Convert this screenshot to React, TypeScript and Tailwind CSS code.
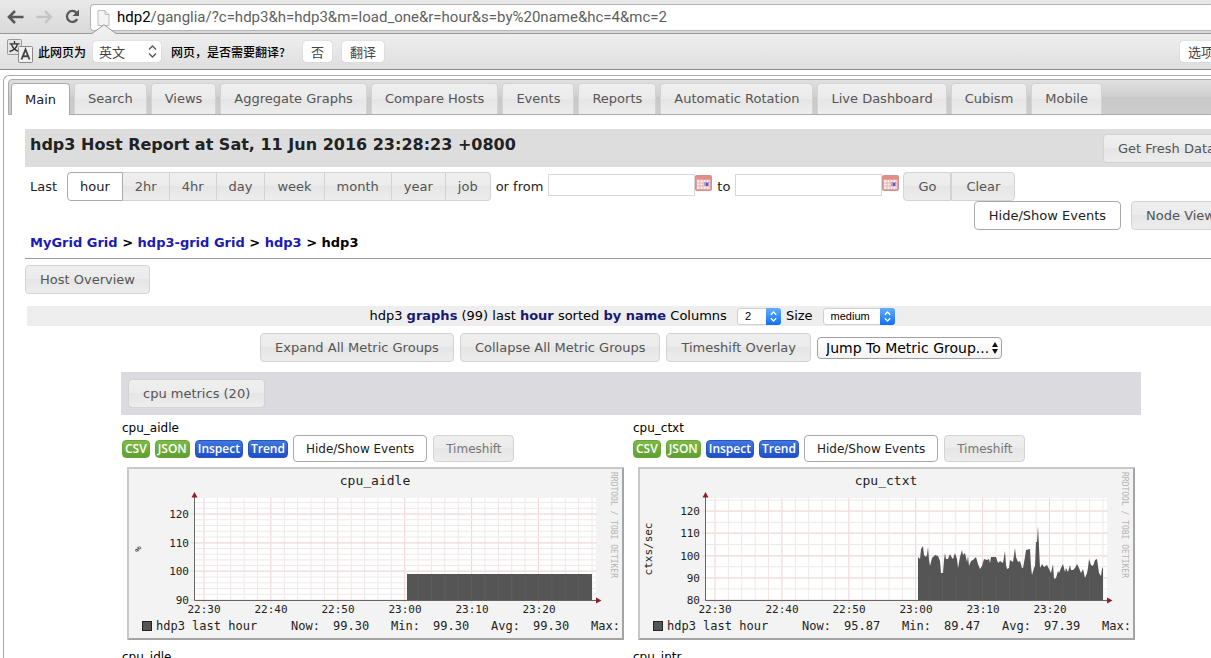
import React from "react";

const glass =
  "bg-[linear-gradient(to_bottom,#efefef_0%,#ebebeb_49%,#e5e5e5_50%,#ededed_100%)]";

const tabs = [
  "Search",
  "Views",
  "Aggregate Graphs",
  "Compare Hosts",
  "Events",
  "Reports",
  "Automatic Rotation",
  "Live Dashboard",
  "Cubism",
  "Mobile",
];

const ranges = ["2hr", "4hr", "day", "week", "month", "year", "job"];

const sizes = {
  normal: "h-[29px] px-[14px] text-[13px]",
  tight: "h-[29px] px-3 text-[13px]",
  small: "h-[27px] px-3 text-xs",
};

function Button({
  children,
  active = false,
  size = "normal",
  className = "",
}: {
  children: React.ReactNode;
  active?: boolean;
  size?: keyof typeof sizes;
  className?: string;
}) {
  return (
    <button
      type="button"
      className={`shrink-0 rounded border whitespace-nowrap ${
        active
          ? "border-[#aaaaaa] bg-white text-[#212121]"
          : `border-[#d3d3d3] text-[#555555] ${glass}`
      } ${sizes[size]} ${className}`}
    >
      {children}
    </button>
  );
}

function CalendarButton({ label }: { label: string }) {
  return (
    <button type="button" aria-label={label} className="mt-[3px] self-start">
      <svg width="17" height="16" viewBox="0 0 17 16" className="block">
        <rect x="0.5" y="0.5" width="16" height="15" rx="1" fill="#e2a19d" stroke="#cf938f" />
        <rect x="1" y="1" width="15" height="3" fill="#e58d86" />
        <rect x="2" y="5" width="13" height="9" fill="#fbeeee" />
        <path d="M2 8H15M2 11H15M5 5V14M8 5V14M11 5V14M14 5V14" stroke="#e6b4b2" />
        <rect x="9" y="7" width="5" height="4" fill="#a9a0d8" />
        <rect x="11" y="8" width="2" height="3" fill="#5d55c0" />
      </svg>
    </button>
  );
}

function MacSelect({ label, options, width }: { label: string; options: string[]; width: string }) {
  return (
    <span className={`relative inline-block ${width}`}>
      <select
        aria-label={label}
        className="block h-[17px] w-full appearance-none rounded-[3px] border border-[#d0d0d0] bg-white pl-[7px] font-['Liberation_Sans',sans-serif] text-[11px] leading-[15px] text-black"
      >
        {options.map((o) => (
          <option key={o}>{o}</option>
        ))}
      </select>
      <svg
        width="15"
        height="17"
        viewBox="0 0 15 17"
        className="pointer-events-none absolute top-0 right-0"
      >
        <defs>
          <linearGradient id="cap" x1="0" y1="0" x2="0" y2="1">
            <stop offset="0" stopColor="#64aefb" />
            <stop offset="1" stopColor="#0f6ff5" />
          </linearGradient>
        </defs>
        <path d="M0 0H12a3 3 0 0 1 3 3V14a3 3 0 0 1-3 3H0Z" fill="url(#cap)" />
        <path d="M4.8 6.8L7.5 4L10.2 6.8M4.8 10.2L7.5 13L10.2 10.2" fill="none" stroke="#fff" strokeWidth="1.3" />
      </svg>
    </span>
  );
}

function BrowserBar() {
  return (
    <div className="flex h-[34px] items-center border-b border-[#999999] bg-[linear-gradient(#e9e9e9,#d9d9d9)] pl-[7px] font-[Roboto,sans-serif] text-[15px]">
      <button type="button" aria-label="Back" className="mr-3">
        <svg width="17" height="14" viewBox="0 0 17 14" className="block" fill="none" stroke="#585858" strokeWidth="2.6">
          <path d="M16.5 7H3M8 1L2 7L8 13" />
        </svg>
      </button>
      <button type="button" aria-label="Forward" className="mr-3">
        <svg width="17" height="14" viewBox="0 0 17 14" className="block" fill="none" stroke="#c4c4c4" strokeWidth="2.4">
          <path d="M0.5 7H14M9 1L15 7L9 13" />
        </svg>
      </button>
      <button type="button" aria-label="Reload" className="mr-[10px]">
        <svg width="15" height="15" viewBox="0 0 15 15" className="block">
          <path d="M12.2 10.2A5.5 5.5 0 1 1 11.6 3.8" fill="none" stroke="#585858" strokeWidth="2.3" />
          <path d="M14 0.5V7H7.6Z" fill="#585858" />
        </svg>
      </button>
      <div className="mt-px flex h-[27px] grow items-center rounded-l border border-r-0 border-[#b5b5b5] bg-white pt-px pl-[6px]">
        <svg width="13" height="16" viewBox="0 0 13 16" className="mr-[7px] shrink-0">
          <path d="M1 0.5H8L12 4.5V15.5H1Z" fill="#f4f4f4" stroke="#bdbdbd" />
          <path d="M8 0.5V4.5H12" fill="none" stroke="#bdbdbd" />
        </svg>
        <span className="whitespace-nowrap text-[#5f5f5f]">
          <span className="text-black">hdp2</span>
          /ganglia/?c=hdp3&amp;h=hdp3&amp;m=load_one&amp;r=hour&amp;s=by%20name&amp;hc=4&amp;mc=2
        </span>
      </div>
    </div>
  );
}

function TranslateBar() {
  const pill = "h-[21px] shrink-0 rounded-[3px] bg-white shadow-[0_0_1px_#999] text-[13px] text-[#444444]";
  return (
    <div className="relative flex h-9 items-center border-b border-[#8c8c8c] bg-[linear-gradient(#efefef,#dedede)] pl-[7px] font-['Noto_Sans_CJK_SC',sans-serif] text-xs font-medium text-black">
      <svg width="24" height="10" viewBox="0 0 24 10" className="absolute -top-[10px] left-[92px]">
        <path d="M0 10L12 0.5L24 10Z" fill="#efefef" />
        <path d="M0 9.5L12 0.7L24 9.5" fill="none" stroke="#999" />
      </svg>
      <svg width="27" height="25" viewBox="0 0 27 25" className="mr-1 shrink-0">
        <rect x="0.5" y="0.5" width="14" height="15" rx="1" fill="#e4e4e4" stroke="#9a9a9a" />
        <path d="M7.5 2V4.500M2.500 4.800H12.500M4.500 5C5.500 9 8.500 11.500 12 12.500M10.500 5C9.500 9 6.500 11.500 2.500 12.500" fill="none" stroke="#333" strokeWidth="1.300" />
        <rect x="11.5" y="7.5" width="14" height="16" rx="1" fill="#f0f0f0" stroke="#888" />
        <path d="M14.5 20.5L18.5 10.5L22.5 20.5M15.8 17.3H21.2" fill="none" stroke="#444" strokeWidth="1.9" />
      </svg>
      <span className="shrink-0">此网页为</span>
      <span className="relative ml-[7px] w-[68px] shrink-0">
        <select aria-label="网页语言" className={`block w-full appearance-none pl-[6px] font-normal ${pill}`}>
          <option>英文</option>
        </select>
        <svg width="9" height="13" viewBox="0 0 9 13" className="pointer-events-none absolute top-1 right-1" fill="none" stroke="#555" strokeWidth="1.3">
          <path d="M1 4.5L4.5 1L8 4.5M1 8.5L4.5 12L8 8.5" />
        </svg>
      </span>
      <span className="ml-[10px] shrink-0">网页，是否需要翻译?</span>
      <button type="button" className={`ml-[18px] px-2 font-normal ${pill}`}>否</button>
      <button type="button" className={`ml-[10px] px-2 font-normal ${pill}`}>翻译</button>
      <button type="button" className={`-mr-[11px] ml-auto px-2 font-normal ${pill}`}>选项</button>
    </div>
  );
}

const ctxt: [number, number][] = [
  [280, 90], [282, 92], [283, 82], [285, 79], [286, 88], [288, 90], [289, 88], [290, 80], [291, 93], [292, 99],
  [294, 91], [297, 88], [300, 89], [302, 94], [303, 106], [305, 106], [306, 93], [307, 86], [308, 92], [310, 92],
  [312, 87], [314, 91], [315, 92], [317, 86], [319, 92], [320, 101], [322, 90], [324, 83], [325, 88], [327, 86],
  [329, 95], [330, 89], [331, 99], [333, 94], [335, 93], [338, 90], [340, 97], [342, 102], [344, 99], [346, 92],
  [349, 93], [351, 92], [352, 96], [353, 90], [358, 90], [360, 96], [362, 94], [365, 96], [367, 84], [368, 98],
  [369, 102], [371, 101], [372, 93], [375, 95], [377, 81], [378, 90], [380, 95], [382, 94], [384, 101], [385, 101],
  [387, 90], [388, 83], [392, 82], [393, 100], [394, 108], [396, 101], [397, 99], [398, 75], [399, 75], [400, 59],
  [401, 80], [402, 101], [404, 97], [406, 100], [409, 98], [411, 102], [413, 106], [415, 97], [416, 112], [418, 111],
  [420, 104], [421, 106], [423, 101], [425, 97], [427, 105], [428, 101], [430, 105], [432, 98], [433, 103], [435, 103],
  [437, 101], [439, 97], [441, 101], [443, 106], [445, 102], [447, 111], [449, 106], [450, 101], [451, 92], [453, 98],
  [455, 99], [457, 93], [459, 92], [461, 106], [463, 109], [464, 102], [465, 100],
];

const idle: [number, number][] = [
  [280, 107],
  [465, 107],
];

type ChartProps = {
  title: string;
  unit: string;
  ticks: { y: number; label: string }[];
  minor: number;
  series: [number, number][];
  now: string;
  min: string;
  avg: string;
};

function Chart({ title, unit, ticks, minor, series, now, min, avg }: ChartProps) {
  const times = ["22:30", "22:40", "22:50", "23:00", "23:10", "23:20"];
  const xs: number[] = [];
  for (let i = 0; i < 30; i++) xs.push(77 + i * 13.38);
  const ys: number[] = [];
  for (let y = 133 - minor; y > 31; y -= minor) ys.push(y);
  const area = `M${series[0][0]} 133 ${series.map(([x, y]) => `L${x} ${y}`).join(" ")} L${series[series.length - 1][0]} 133Z`;
  return (
    <svg width="497" height="173" viewBox="0 0 497 173" className="ml-[5px] block font-['DejaVu_Sans_Mono',monospace]">
      <rect width="497" height="173" fill="#f3f3f3" />
      <path d="M0 0H497L495 2H2V171L0 173Z" fill="#c8c8c8" />
      <path d="M497 0V173H0L2 171H495V2Z" fill="#a4a4a4" />
      <rect x="67" y="31" width="402" height="102" fill="#fff" />
      {xs.map((x, i) => (
        <path key={x} d={`M${x} 31V${i % 5 === 0 ? 136 : 133}`} stroke={i % 5 === 0 ? "#f0d3d3" : "#efe8e8"} />
      ))}
      {ys.map((y) => (
        <path key={y} d={`M67 ${y}H469`} stroke="#efe8e8" />
      ))}
      {ticks.map((t) => (
        <path key={t.y} d={`M64 ${t.y}H470`} stroke="#f0dada" />
      ))}
      <path d={area} fill="#555555" />
      {xs.filter((x) => x > 280 && x < 465).map((x) => (
        <path key={x} d={`M${x} 109V133`} stroke="#fff" strokeOpacity="0.05" />
      ))}
      <path d="M67.500 28V133.500H471" fill="none" stroke="#666" />
      <path d="M64.500 30.500L67.500 25L70.500 30.500Z" fill="#8f1d2c" />
      <path d="M469 130.500L474.500 133.500L469 136.500Z" fill="#8f1d2c" />
      <g fill="#222222" fontSize="11">
        {ticks.map((t) => (
          <text key={t.label} x="62" y={t.y + 4} textAnchor="end">
            {t.label}
          </text>
        ))}
        {times.map((t, i) => (
          <text key={t} x={77 + i * 67} y="146" textAnchor="middle">
            {t}
          </text>
        ))}
      </g>
      <text x="248" y="18" fontSize="13" textAnchor="middle" fill="#222222">
        {title}
      </text>
      <text x="14" y="82" fontSize={unit.length === 1 ? 9 : 11} textAnchor="middle" fill="#222222" transform="rotate(-90 14 82)">
        {unit}
      </text>
      <text x="484" y="5" fontSize="8" fill="#b4b4b4" transform="rotate(90 484 5)">
        RRDTOOL / TOBI OETIKER
      </text>
      <rect x="15.500" y="154.500" width="9" height="9" fill="#555555" stroke="#222" />
      <g fill="#222222" fontSize="12" transform="translate(0 163)">
        <text x="29">hdp3 last hour</text>
        <text x="164">Now:</text>
        <text x="206">{now}</text>
        <text x="264">Min:</text>
        <text x="306">{min}</text>
        <text x="364">Avg:</text>
        <text x="406">{avg}</text>
        <text x="464">Max:</text>
      </g>
    </svg>
  );
}

function Metric({ name, children }: { name: string; children?: React.ReactNode }) {
  const badge = "flex items-center rounded h-[18px] px-[2px] text-xs leading-[18px] text-white font-['Open_Sans',sans-serif] font-semibold border";
  const green = "border-[#6aa53a] bg-[linear-gradient(#7dbb45,#5f9f30)]";
  const blue = "border-[#2a55b8] bg-[linear-gradient(#3f78e0,#1f4fc8)]";
  return (
    <section className="w-[511px] shrink-0 pl-px">
      <h3 className="mb-[-1px] text-xs leading-4 text-black">{name}</h3>
      <div className="mb-[5px] flex items-center gap-[5px]">
        <button type="button" className={`${badge} ${green}`}>CSV</button>
        <button type="button" className={`${badge} ${green}`}>JSON</button>
        <button type="button" className={`${badge} ${blue}`}>Inspect</button>
        <button type="button" className={`${badge} ${blue}`}>Trend</button>
        <Button active size="small">Hide/Show Events</Button>
        <Button size="small" className="ml-px text-[#777777]">Timeshift</Button>
      </div>
      {children}
    </section>
  );
}

export default function App() {
  const link = "text-[#1a1ab4]";
  const navy = "font-bold text-[#191970]";
  return (
    <div className="h-screen overflow-hidden bg-white font-['DejaVu_Sans',Verdana,sans-serif] text-[13px] text-[#222222]">
      <BrowserBar />
      <TranslateBar />

      <div className="mt-[5px] -mr-[30px] ml-[3px] rounded-tl-md border border-[#a8a8a8] border-r-0 border-b-0 pt-[3px] pl-1">
        <nav className="flex h-9 items-end gap-1 rounded-tl border border-[#aaaaaa] bg-[linear-gradient(#e0e0e0,#cfcfcf_49%,#c8c8c8_50%,#cdcdcd)] pl-[2px]">
          <a href="#main" className="-mb-px flex h-8 items-center rounded-t border border-b-0 border-[#aaaaaa] bg-white px-[13px] text-[#212121]">
            Main
          </a>
          {tabs.map((t) => (
            <a
              key={t}
              href="#tab"
              className={`flex h-[31px] items-center rounded-t border border-b-0 border-[#d3d3d3] px-[13px] whitespace-nowrap text-[#555555] ${glass}`}
            >
              {t}
            </a>
          ))}
        </nav>

        <main className="pt-[14px] pr-1 pl-[17px]">
          <header className="flex h-[38px] justify-between bg-[#dddddd] pr-[7px] pl-[5px]">
            <h1 className="pt-[6px] text-base leading-5 font-bold whitespace-nowrap">
              hdp3 Host Report at Sat, 11 Jun 2016 23:28:23 +0800
            </h1>
            <Button className="mt-[5px]">Get Fresh Data</Button>
          </header>

          <div className="mt-[5px] flex items-center pl-[5px]">
            <span className="w-[37px]">Last</span>
            <div className="flex">
              <Button active size="tight" className="rounded-r-none">hour</Button>
              {ranges.map((r, i) => (
                <Button
                  key={r}
                  size="tight"
                  className={`border-l-0 ${i === ranges.length - 1 ? "rounded-l-none" : "rounded-none"}`}
                >
                  {r}
                </Button>
              ))}
            </div>
            <label htmlFor="from" className="mx-[5px] whitespace-nowrap">or from</label>
            <input id="from" className="mb-[3px] h-[22px] w-[147px] border border-[#d8d8d8] bg-white px-1" />
            <CalendarButton label="Pick start date" />
            <label htmlFor="to" className="mx-[5px]">to</label>
            <input id="to" className="mb-[3px] h-[22px] w-[147px] border border-[#d8d8d8] bg-white px-1" />
            <CalendarButton label="Pick end date" />
            <div className="ml-1 flex">
              <Button className="rounded-r-none">Go</Button>
              <Button className="rounded-l-none">Clear</Button>
            </div>
          </div>

          <div className="flex justify-end gap-[10px] pr-[7px]">
            <Button active>Hide/Show Events</Button>
            <Button>Node View</Button>
          </div>

          <div className="border-b border-[#999999] pt-1 pb-[6px] pl-[5px] text-[13px] leading-[18px] font-bold text-black">
            <a href="#grid" className={link}>MyGrid Grid</a> &gt;{" "}
            <a href="#cluster" className={link}>hdp3-grid Grid</a> &gt;{" "}
            <a href="#host" className={link}>hdp3</a> &gt; hdp3
          </div>
          <Button className="mt-[6px]">Host Overview</Button>

          <div className="mt-3 ml-[2px] flex h-5 items-center justify-center bg-[#eeeeee] text-black">
            <span className="whitespace-nowrap">
              hdp3 <b className={navy}>graphs</b> (99) last <b className={navy}>hour</b> sorted{" "}
              <b className={navy}>by name</b> Columns
            </span>
            <span className="ml-[10px] flex items-center">
              <MacSelect label="Columns" options={["2"]} width="w-11" />
            </span>
            <span className="mr-[10px] ml-[5px]">Size</span>
            <MacSelect label="Size" options={["medium"]} width="w-[72px]" />
          </div>

          <div className="mt-[7px] flex items-center justify-center gap-[6px]">
            <Button>Expand All Metric Groups</Button>
            <Button>Collapse All Metric Groups</Button>
            <Button>Timeshift Overlay</Button>
            <span className="relative">
              <select
                aria-label="Jump to metric group"
                className="block h-[22px] w-[185px] appearance-none rounded border border-[#a0a0a0] bg-[linear-gradient(#ffffff,#f3f3f3)] pl-2 text-sm leading-5 text-black"
              >
                <option>Jump To Metric Group...</option>
              </select>
              <svg width="6" height="12" viewBox="0 0 6 12" className="pointer-events-none absolute top-[5px] right-1">
                <path d="M0 5L3 0L6 5ZM0 7L3 12L6 7Z" fill="#111" />
              </svg>
            </span>
          </div>

          <div className="mx-auto mt-[10px] w-[1020px]">
            <div className="h-[43px] bg-[#dadadf] pt-[7px] pl-[7px]">
              <Button className="block">cpu metrics (20)</Button>
            </div>
            <div className="-mr-1 mt-[5px] flex flex-wrap gap-y-[9px]">
              <Metric name="cpu_aidle">
                <Chart
                  title="cpu_aidle"
                  unit="%"
                  ticks={[
                    { y: 47, label: "120" },
                    { y: 76, label: "110" },
                    { y: 104, label: "100" },
                    { y: 133, label: "90" },
                  ]}
                  minor={5.73}
                  series={idle}
                  now="99.30"
                  min="99.30"
                  avg="99.30"
                />
              </Metric>
              <Metric name="cpu_ctxt">
                <Chart
                  title="cpu_ctxt"
                  unit="ctxs/sec"
                  ticks={[
                    { y: 44, label: "120" },
                    { y: 66, label: "110" },
                    { y: 89, label: "100" },
                    { y: 111, label: "90" },
                    { y: 133, label: "80" },
                  ]}
                  minor={11.1}
                  series={ctxt}
                  now="95.87"
                  min="89.47"
                  avg="97.39"
                />
              </Metric>
              <Metric name="cpu_idle" />
              <Metric name="cpu_intr" />
            </div>
          </div>
        </main>
      </div>
    </div>
  );
}
